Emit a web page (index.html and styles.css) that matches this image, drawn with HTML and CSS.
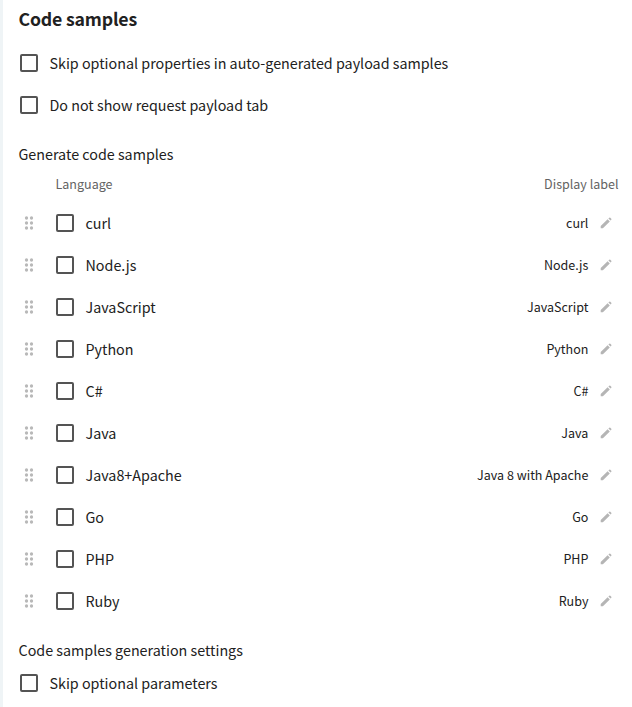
FILE: index.html
```html
<!DOCTYPE html>
<html lang="en">
<head>
<meta charset="utf-8">
<title>Code samples</title>
<link rel="stylesheet" href="styles.css">
</head>
<body>
<svg class="defs" width="0" height="0" aria-hidden="true">
  <symbol id="grip" viewBox="0 0 10 14"><circle cx="2.5" cy="2" r="1.65"/><circle cx="7.5" cy="2" r="1.65"/><circle cx="2.5" cy="7" r="1.65"/><circle cx="7.5" cy="7" r="1.65"/><circle cx="2.5" cy="12" r="1.65"/><circle cx="7.5" cy="12" r="1.65"/></symbol>
  <symbol id="pencil" viewBox="0 0 12 12"><path d="M.7 9.1 7.6 2.2 9.8 4.4 2.9 11.3H.7ZM8.4 1.5 9.3.7Q9.8.3 10.3.7L11.3 1.7Q11.7 2.2 11.3 2.7L10.5 3.6Z"/></symbol>
</svg>
<main class="panel">
  <h2 class="title">Code samples</h2>
  <label class="option"><span class="box"></span><span>Skip optional properties in auto-generated payload samples</span></label>
  <label class="option"><span class="box"></span><span>Do not show request payload tab</span></label>
  <h3 class="subtitle generate">Generate code samples</h3>
  <div class="head"><span>Language</span><span>Display label</span></div>
  <ul class="langs">
    <li><svg class="grip"><use href="#grip"/></svg><span class="box"></span><span class="name">curl</span><span class="label">curl</span><svg class="pencil"><use href="#pencil"/></svg></li>
    <li><svg class="grip"><use href="#grip"/></svg><span class="box"></span><span class="name">Node.js</span><span class="label">Node.js</span><svg class="pencil"><use href="#pencil"/></svg></li>
    <li><svg class="grip"><use href="#grip"/></svg><span class="box"></span><span class="name">JavaScript</span><span class="label">JavaScript</span><svg class="pencil"><use href="#pencil"/></svg></li>
    <li><svg class="grip"><use href="#grip"/></svg><span class="box"></span><span class="name">Python</span><span class="label">Python</span><svg class="pencil"><use href="#pencil"/></svg></li>
    <li><svg class="grip"><use href="#grip"/></svg><span class="box"></span><span class="name">C#</span><span class="label">C#</span><svg class="pencil"><use href="#pencil"/></svg></li>
    <li><svg class="grip"><use href="#grip"/></svg><span class="box"></span><span class="name">Java</span><span class="label">Java</span><svg class="pencil"><use href="#pencil"/></svg></li>
    <li><svg class="grip"><use href="#grip"/></svg><span class="box"></span><span class="name">Java8+Apache</span><span class="label">Java 8 with Apache</span><svg class="pencil"><use href="#pencil"/></svg></li>
    <li><svg class="grip"><use href="#grip"/></svg><span class="box"></span><span class="name">Go</span><span class="label">Go</span><svg class="pencil"><use href="#pencil"/></svg></li>
    <li><svg class="grip"><use href="#grip"/></svg><span class="box"></span><span class="name">PHP</span><span class="label">PHP</span><svg class="pencil"><use href="#pencil"/></svg></li>
    <li><svg class="grip"><use href="#grip"/></svg><span class="box"></span><span class="name">Ruby</span><span class="label">Ruby</span><svg class="pencil"><use href="#pencil"/></svg></li>
  </ul>
  <h3 class="subtitle settings">Code samples generation settings</h3>
  <label class="option"><span class="box"></span><span>Skip optional parameters</span></label>
</main>
</body>
</html>
```
FILE: styles.css
```css
* { box-sizing: border-box; }
html, body { margin: 0; height: 100%; overflow: hidden; }
body {
  font-family: "Noto Sans CJK SC", "Noto Sans", sans-serif;
  font-size: 14.32px;
  line-height: 24px;
  color: #212121;
  background: #fff;
}
.defs { display: none; }
.panel {
  height: 707px;
  overflow: hidden;
  border-left: 3px solid #eff4f6;
  padding-left: 15.5px;
}
.title { margin: 0; height: 42px; line-height: 37px; font-size: 17.7px; font-weight: 700; letter-spacing: -0.18px; }
.option { display: flex; align-items: center; height: 42px; padding-left: 1.5px; gap: 11.5px; white-space: nowrap; }
.box { flex: none; width: 18px; height: 18px; border: 2px solid #545454; border-radius: 2px; }
.subtitle { margin: 0; font-size: 14.32px; font-weight: 400; }
.generate { margin-top: 16px; }
.head {
  display: flex; justify-content: space-between;
  margin-top: 8px; padding: 0 13.5px 0 37px; height: 28px; line-height: 20px;
  font-size: 12.53px; color: #636363;
}
.langs { list-style: none; margin: 0; padding: 0; }
.langs li { display: flex; align-items: center; height: 42px; padding: 0 20px 0 5.5px; }
.grip { width: 10px; height: 14px; margin-right: 22px; fill: #b8b8b8; }
.name { margin-left: 11.5px; }
.label { margin-left: auto; font-size: 12.53px; }
.pencil { width: 12px; height: 12px; margin-left: 11.6px; fill: #b5b5b5; }
.settings { margin-top: 16px; }
```
